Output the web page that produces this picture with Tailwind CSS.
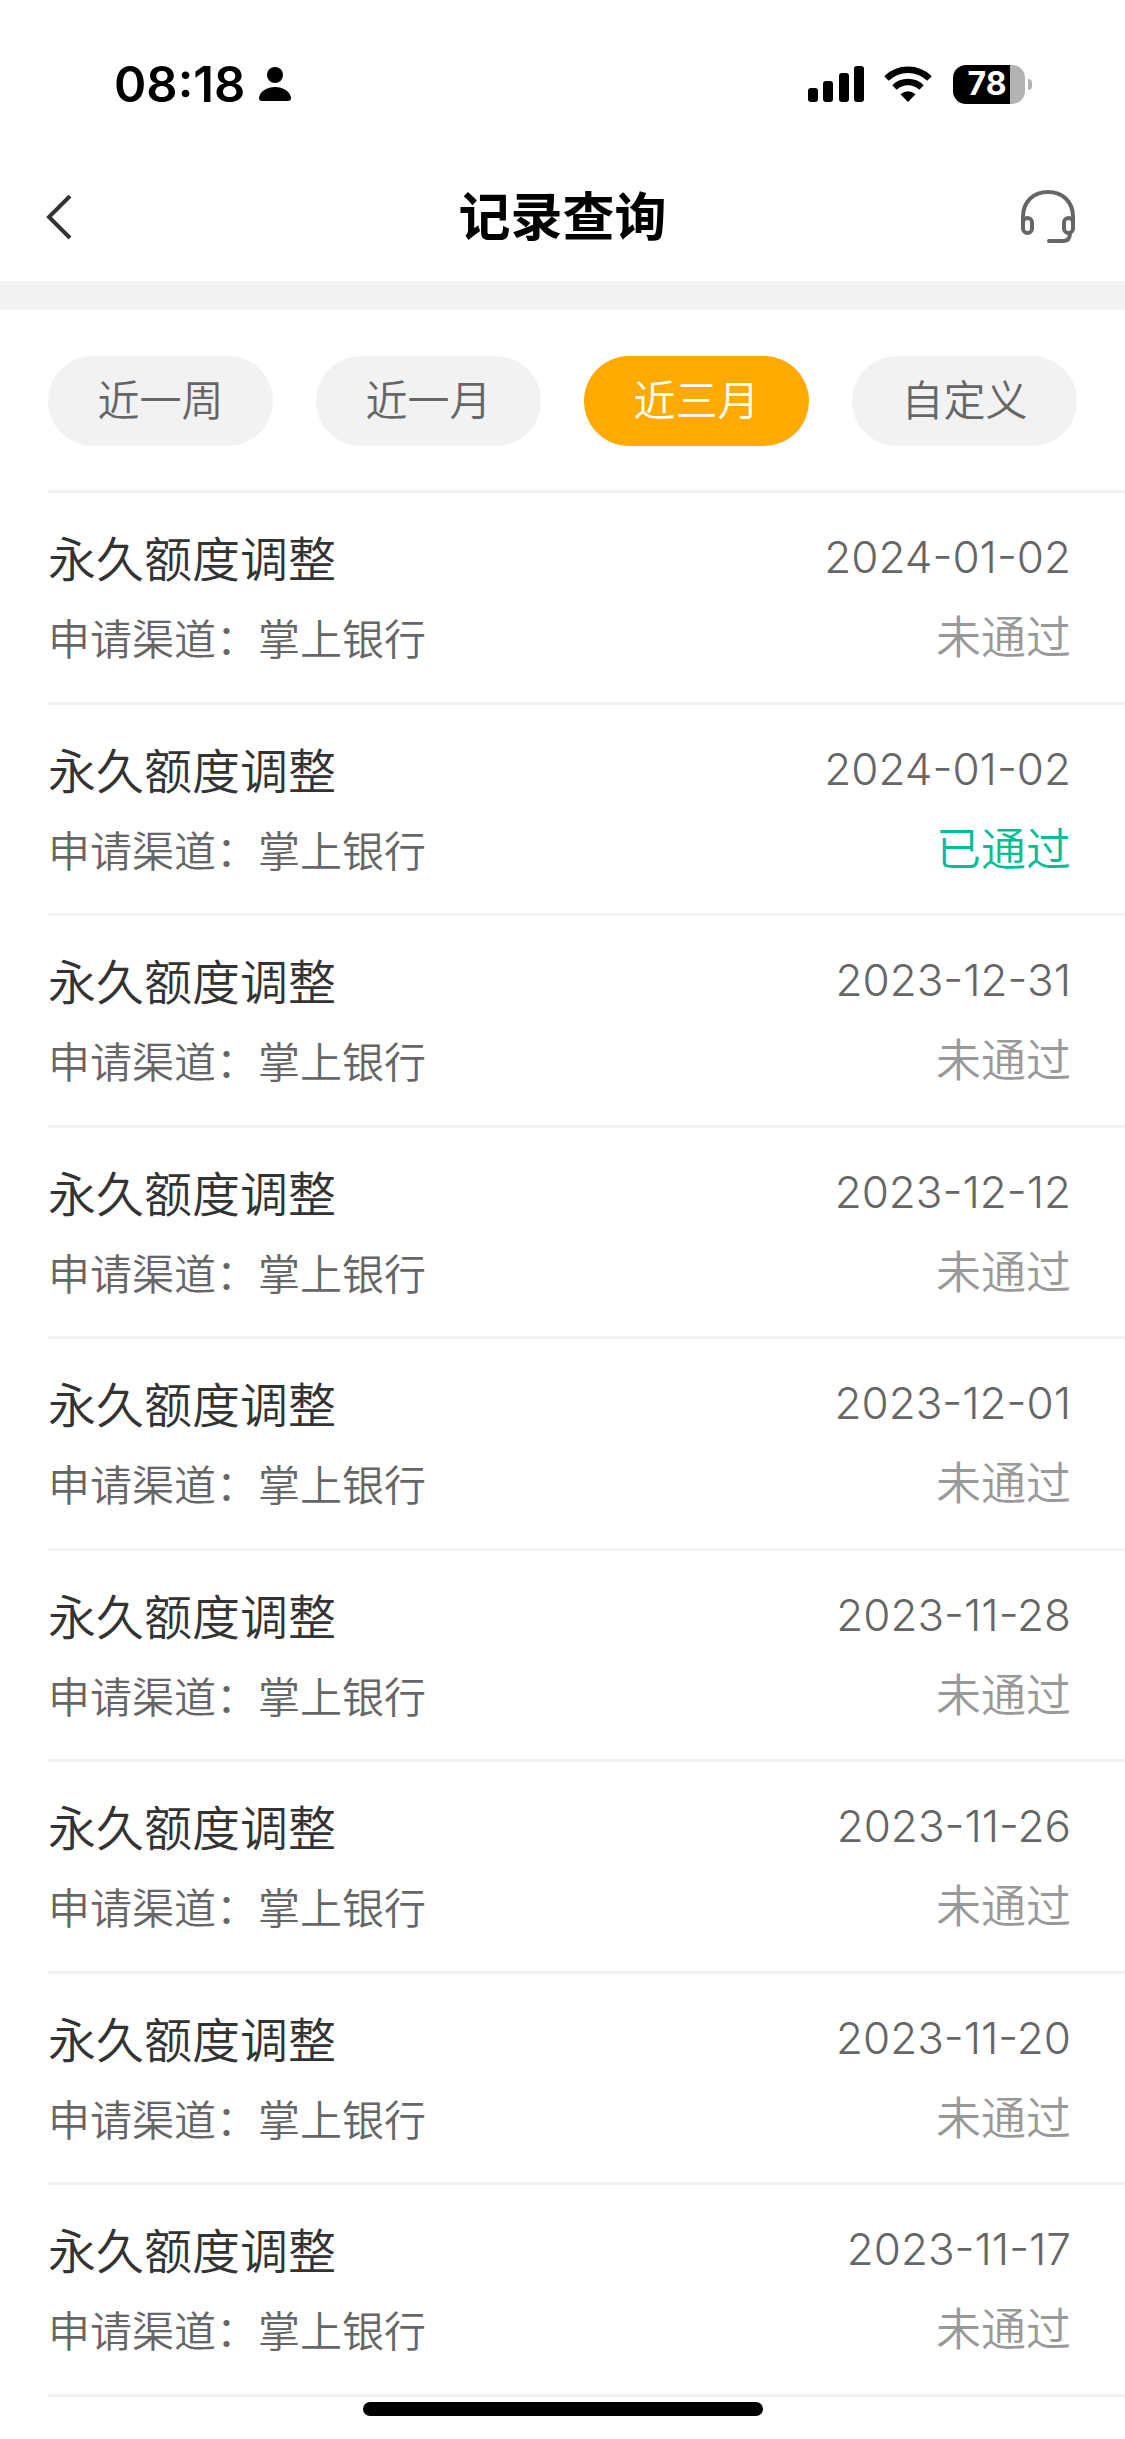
<!DOCTYPE html>
<html lang="zh-CN">
<head>
  <meta charset="UTF-8">
  <meta name="viewport" content="width=device-width, initial-scale=1.0">
  <title>记录查询</title>
  <script src="https://cdn.jsdelivr.net/npm/@tailwindcss/browser@4"></script>
</head>
<body class="min-h-screen bg-white font-['Inter','Noto_Sans_CJK_SC',sans-serif] text-[#666]">
  <!-- 状态栏 -->
  <div class="flex h-[150px] items-center justify-between pt-[18px] pr-[93px] pl-[114px] text-black">
    <div class="flex items-center gap-[14px]">
      <span class="text-[49px] leading-none font-semibold">08:18</span>
      <svg class="h-9 w-8" viewBox="0 0 32 36" fill="currentColor" aria-hidden="true">
        <circle cx="16" cy="9" r="8"/>
        <path d="M3 35C1 35 0 34 0 32C1 25 8 21 16 21S31 25 32 32C32 34 31 35 29 35Z"/>
      </svg>
    </div>
    <div class="flex items-center">
      <svg class="mr-[20px] h-9 w-14" viewBox="0 0 56 36" fill="currentColor" aria-hidden="true">
        <rect x="0" y="22" width="10" height="14" rx="3"/>
        <rect x="15" y="15" width="10" height="21" rx="3"/>
        <rect x="31" y="7" width="10" height="29" rx="3"/>
        <rect x="46" y="0" width="10" height="36" rx="3"/>
      </svg>
      <svg class="mr-[21px] h-9 w-12" viewBox="0 0 48 36" fill="none" aria-hidden="true">
        <path d="M2.500 12.500A31 31 0 0 1 45.500 12.500" stroke="currentColor" stroke-width="6.500"/>
        <path d="M10.500 21.500A19.500 19.500 0 0 1 37.500 21.500" stroke="currentColor" stroke-width="6.500"/>
        <path d="M24 36L16.500 28.300Q24 22 31.500 28.300Z" fill="currentColor"/>
      </svg>
      <div class="flex items-center gap-[3px]">
        <div class="flex h-[39px] w-[72px] items-center justify-center overflow-hidden rounded-[13px] bg-linear-to-r from-black from-[79%] to-[#b3b3b3] to-[79%] pr-1">
          <span class="text-[32px] leading-none font-bold text-white">78</span>
        </div>
        <div class="h-[11px] w-1 rounded-r-full bg-[#b3b3b3]"></div>
      </div>
    </div>
  </div>

  <!-- 导航栏 -->
  <header class="grid h-[131px] grid-cols-[1fr_auto_1fr] items-center px-[46px] pt-1">
    <button type="button" aria-label="返回" class="justify-self-start text-[#333]">
      <svg class="h-[46px] w-7" viewBox="0 0 28 46" fill="none" stroke="currentColor" stroke-width="4">
        <path d="M24 1L3 22L24 43"/>
      </svg>
    </button>
    <h1 class="text-[52px] leading-none font-bold text-black">记录查询</h1>
    <button type="button" aria-label="客服" class="justify-self-end">
      <svg class="h-14 w-[62px]" viewBox="0 0 62 56" fill="none" stroke="currentColor" stroke-width="4" stroke-linecap="round">
        <path d="M6 37V27C6 11 17 2 31 2S56 11 56 27V37"/>
        <rect x="6" y="28" width="9" height="15" rx="4.500"/>
        <rect x="47" y="28" width="9" height="15" rx="4.500"/>
        <path d="M53 43C53 49 50 51 46 51H32"/>
      </svg>
    </button>
  </header>
  <div class="h-[29px] bg-[#f2f2f2]"></div>

  <main class="font-[350]">
    <!-- 时间筛选 -->
    <div class="grid grid-cols-4 gap-[43px] px-12 pt-[46px] pb-11 text-[42px] leading-none">
      <button type="button" class="h-[90px] rounded-full bg-[#f2f2f2]">近一周</button>
      <button type="button" class="h-[90px] rounded-full bg-[#f2f2f2]">近一月</button>
      <button type="button" aria-pressed="true" class="h-[90px] rounded-full bg-[#ffaa00] text-white">近三月</button>
      <button type="button" class="h-[90px] rounded-full bg-[#f2f2f2]">自定义</button>
    </div>

    <ul id="records" class="ml-12 border-b-3 border-[#f2f2f2]"></ul>
  </main>

  <div class="fixed bottom-[23px] left-1/2 h-[14px] w-[400px] -translate-x-1/2 rounded-full bg-black"></div>

  <script>
    const records = [
      { date: '2024-01-02', passed: false },
      { date: '2024-01-02', passed: true },
      { date: '2023-12-31', passed: false },
      { date: '2023-12-12', passed: false },
      { date: '2023-12-01', passed: false },
      { date: '2023-11-28', passed: false },
      { date: '2023-11-26', passed: false },
      { date: '2023-11-20', passed: false },
      { date: '2023-11-17', passed: false },
    ];

    // 渲染记录列表
    document.getElementById('records').innerHTML = records.map(r => `
      <li class="flex justify-between border-t-3 border-[#f2f2f2] pt-[25px] pr-[54px] pb-[21px] odd:pb-[22px]">
        <div class="pt-[2px]">
          <h2 class="text-[48px] leading-[80px] text-[#333]">永久额度调整</h2>
          <p class="text-[42px] leading-[80px]">申请渠道：掌上银行</p>
        </div>
        <div class="text-right">
          <time class="block text-[44px] leading-[78px]">${r.date}</time>
          <p class="text-[45px] leading-[84px] ${r.passed ? 'text-[#00bf97]' : 'text-[#999]'}">${r.passed ? '已通过' : '未通过'}</p>
        </div>
      </li>`).join('');
  </script>
</body>
</html>
